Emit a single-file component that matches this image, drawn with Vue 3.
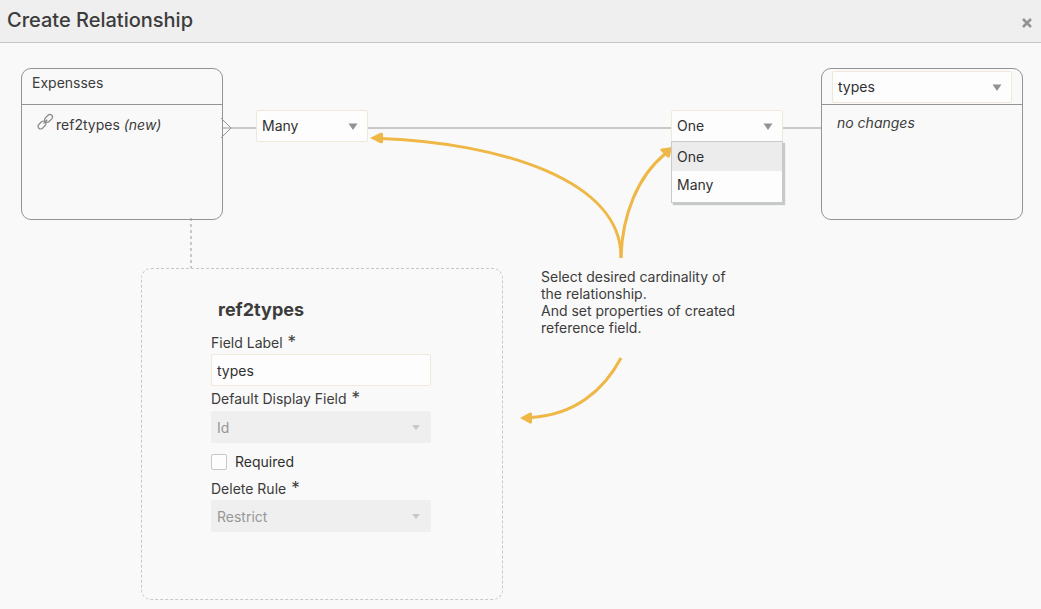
<script setup>
import { ref } from 'vue'

const sourceCardinality = ref('Many')
const targetCardinality = ref('One')
const targetEntity = ref('types')
const fieldLabel = ref('types')
const displayField = ref('Id')
const required = ref(false)
const deleteRule = ref('Restrict')
const cardinalities = ['One', 'Many']
</script>

<template>
  <div class="dialog">
    <header class="titlebar">
      <h1>Create Relationship</h1>
      <button class="close" type="button" aria-label="Close">
        <svg width="10" height="10" viewBox="0 0 10 10"><path d="M1 1 L9 9 M9 1 L1 9" /></svg>
      </button>
    </header>

    <main class="workspace">
      <div class="relation">
        <section class="entity">
          <h2 class="entity-head">Expensses</h2>
          <p class="entity-field">
            <svg class="link" width="18" height="18" viewBox="0 0 18 18">
              <rect x="-4.5" y="-2.6" width="9" height="5.2" rx="2.6" transform="translate(5 13) rotate(-45)" />
              <rect x="-4.5" y="-2.6" width="9" height="5.2" rx="2.6" transform="translate(11.6 6.4) rotate(-45)" />
              <path d="M6.400 11.600 L10.200 7.800" />
            </svg>
            <span>ref2types <em>(new)</em></span>
          </p>
        </section>

        <div class="line line-start">
          <svg class="crow" width="12" height="22" viewBox="0 0 12 22"><path d="M0 1 L10 11 L0 21" /></svg>
        </div>

        <div class="picker cardinality">
          <select v-model="sourceCardinality" aria-label="Source cardinality">
            <option v-for="c in cardinalities" :key="c">{{ c }}</option>
          </select>
          <svg class="caret" width="10" height="7" viewBox="0 0 10 7"><path d="M0.500 0.500 H9.500 L5 7 Z" /></svg>
        </div>

        <div class="line line-middle"></div>

        <div class="picker cardinality">
          <select v-model="targetCardinality" aria-label="Target cardinality">
            <option v-for="c in cardinalities" :key="c">{{ c }}</option>
          </select>
          <svg class="caret" width="10" height="7" viewBox="0 0 10 7"><path d="M0.500 0.500 H9.500 L5 7 Z" /></svg>
          <ul class="menu" role="listbox" aria-label="Target cardinality options">
            <li
              v-for="c in cardinalities"
              :key="c"
              role="option"
              :aria-selected="c === targetCardinality"
              :class="{ selected: c === targetCardinality }"
              @click="targetCardinality = c"
            >{{ c }}</li>
          </ul>
        </div>

        <div class="line line-end"></div>

        <section class="entity">
          <div class="entity-head entity-choice">
            <div class="picker">
              <select v-model="targetEntity" aria-label="Target entity">
                <option>types</option>
              </select>
              <svg class="caret" width="10" height="7" viewBox="0 0 10 7"><path d="M0.500 0.500 H9.500 L5 7 Z" /></svg>
            </div>
          </div>
          <p class="entity-empty"><em>no changes</em></p>
        </section>
      </div>

      <div class="tether"></div>

      <div class="details">
        <form class="properties" @submit.prevent>
          <h2>ref2types</h2>
          <label for="field-label">Field Label <span class="star">*</span></label>
          <input id="field-label" v-model="fieldLabel" class="text" type="text" />
          <label for="display-field">Default Display Field <span class="star">*</span></label>
          <div class="picker">
            <select id="display-field" v-model="displayField" disabled>
              <option>Id</option>
            </select>
            <svg class="caret faint" width="8" height="5" viewBox="0 0 8 5"><path d="M0 0 H8 L4 5 Z" /></svg>
          </div>
          <div class="check">
            <input id="required" v-model="required" type="checkbox" />
            <label for="required">Required</label>
          </div>
          <label for="delete-rule">Delete Rule <span class="star">*</span></label>
          <div class="picker">
            <select id="delete-rule" v-model="deleteRule" disabled>
              <option>Restrict</option>
            </select>
            <svg class="caret faint" width="8" height="5" viewBox="0 0 8 5"><path d="M0 0 H8 L4 5 Z" /></svg>
          </div>
        </form>

        <p class="hint">
          Select desired cardinality of<br />
          the relationship.<br />
          And set properties of created<br />
          reference field.
        </p>
      </div>
    </main>

    <svg class="arrows" width="1041" height="609" viewBox="0 0 1041 609" aria-hidden="true">
      <path class="stroke" d="M621 258 C622 180 500 143 381 138.500" />
      <path class="stroke" d="M621 258 C622 215 638 176 665 154" />
      <path class="stroke" d="M621 358 C604 390 575 415 531 417.500" />
      <path class="head" d="M370 138 L380 133 Q383 132 383 134 V142 Q383 144 380 143 Z" />
      <path class="head" d="M672 147 L662 148.500 Q659 149 661 151 L667 157 Q669 159 670 156 Z" />
      <path class="head" d="M520 418 L530 412.500 Q532 412 532 414 V422 Q532 424 530 423.500 Z" />
    </svg>
  </div>
</template>

<style>
body {
  margin: 0;
  background: #f9f9f9;
}
</style>

<style scoped>
.dialog {
  position: relative;
  min-height: 100vh;
  box-sizing: border-box;
  background: #f9f9f9;
  color: #3c3c3c;
  font: 14px/17px Inter, "Liberation Sans", sans-serif;
}
.dialog * {
  box-sizing: border-box;
}
h1, h2, p, ul {
  margin: 0;
  padding: 0;
}
.titlebar {
  display: flex;
  align-items: center;
  justify-content: space-between;
  height: 43px;
  padding: 0 8px 3px 7px;
  background: #efefef;
  border-bottom: 1px solid #c6c6c6;
}
h1 {
  font-size: 20px;
  line-height: 24px;
  font-weight: 500;
}
.close {
  display: flex;
  margin-top: 7px;
  padding: 1px;
  border: 0;
  background: none;
}
.close path {
  stroke: #929292;
  stroke-width: 2.5;
}
.workspace {
  padding: 25px 18px 8px 21px;
}
.relation {
  display: flex;
  align-items: flex-start;
}
.entity {
  flex: none;
  width: 202px;
  height: 152px;
  border: 1px solid #949494;
  border-radius: 10px;
}
.entity-head {
  height: 36px;
  padding: 5px 10px;
  border-bottom: 1px solid #949494;
  font-size: 14px;
  font-weight: 400;
}
.entity-choice {
  padding: 2px 10px;
}
.entity-field {
  display: flex;
  gap: 1px;
  padding: 11px 15px;
}
.entity-empty {
  padding: 9px 15px;
}
.link {
  margin-top: -4px;
  fill: none;
  stroke: #8c8c8c;
  stroke-width: 1.3;
}
.line {
  position: relative;
  height: 2px;
  margin-top: 59px;
  background: #c8c8c8;
}
.line-start {
  width: 33px;
}
.line-middle {
  flex: 1;
}
.line-end {
  width: 38px;
}
.crow {
  position: absolute;
  left: -2px;
  top: -10px;
  fill: none;
  stroke: #949494;
}
.picker {
  position: relative;
}
.cardinality {
  flex: none;
  width: 112px;
  margin-top: 42px;
}
select,
.text {
  display: block;
  width: 100%;
  height: 32px;
  margin: 0;
  padding: 0 5px;
  appearance: none;
  border: 1px solid #f0e8d8;
  border-radius: 2px;
  background: #fdfdfe;
  color: #303030;
  font: inherit;
  opacity: 1;
}
select {
  padding-bottom: 2px;
}
select:disabled {
  padding-bottom: 0;
  border-color: #efefef;
  background: #efefef;
  color: #979797;
}
.caret {
  position: absolute;
  right: 10px;
  top: 13px;
  fill: #929292;
  pointer-events: none;
}
.caret.faint {
  top: 14px;
  right: 11px;
  fill: #c8c8c0;
}
.menu {
  position: absolute;
  z-index: 2;
  top: 31px;
  left: 0;
  width: 112px;
  padding-bottom: 3px;
  list-style: none;
  background: #fdfdfe;
  border: 1px solid #c8cacb;
  box-shadow: 2px 2px 1px #c6c9ca;
  color: #303030;
}
.menu li {
  padding: 5px;
  line-height: 18px;
}
.menu .selected {
  padding-top: 6px;
  background: #ececec;
}
.tether {
  width: 2px;
  height: 50px;
  margin: -2px 0 0 169px;
  background: repeating-linear-gradient(#c8c8c8 0 3px, transparent 3px 6px);
}
.details {
  display: flex;
  align-items: flex-start;
  gap: 38px;
  padding-left: 120px;
}
.properties {
  width: 362px;
  min-height: 332px;
  padding: 29px 71px 24px 69px;
  border: 1px dashed #c8c8c8;
  border-radius: 10px;
}
.properties h2 {
  padding-left: 7px;
  margin-bottom: 12px;
  font-size: 18px;
  line-height: 24px;
  font-weight: 700;
}
.properties > label {
  display: block;
  height: 20px;
  margin-top: 4px;
  line-height: 17px;
}
.text {
  margin-bottom: 4px;
}
.text + label {
  height: 21px;
}
.star {
  margin-left: 1px;
  font-size: 17px;
  line-height: 1;
}
.check {
  display: flex;
  align-items: center;
  gap: 8px;
  margin: 10px 0;
  color: #303030;
}
.check input {
  appearance: none;
  width: 16px;
  height: 16px;
  margin: 0;
  border: 1px solid #c4c8ca;
  border-radius: 2px;
  background: #fdfdfe;
}
.hint {
  white-space: nowrap;
}
.arrows {
  position: absolute;
  left: 0;
  top: 0;
  pointer-events: none;
}
.stroke {
  fill: none;
  stroke: #efb746;
  stroke-width: 3;
}
.head {
  fill: #efb746;
}
</style>
